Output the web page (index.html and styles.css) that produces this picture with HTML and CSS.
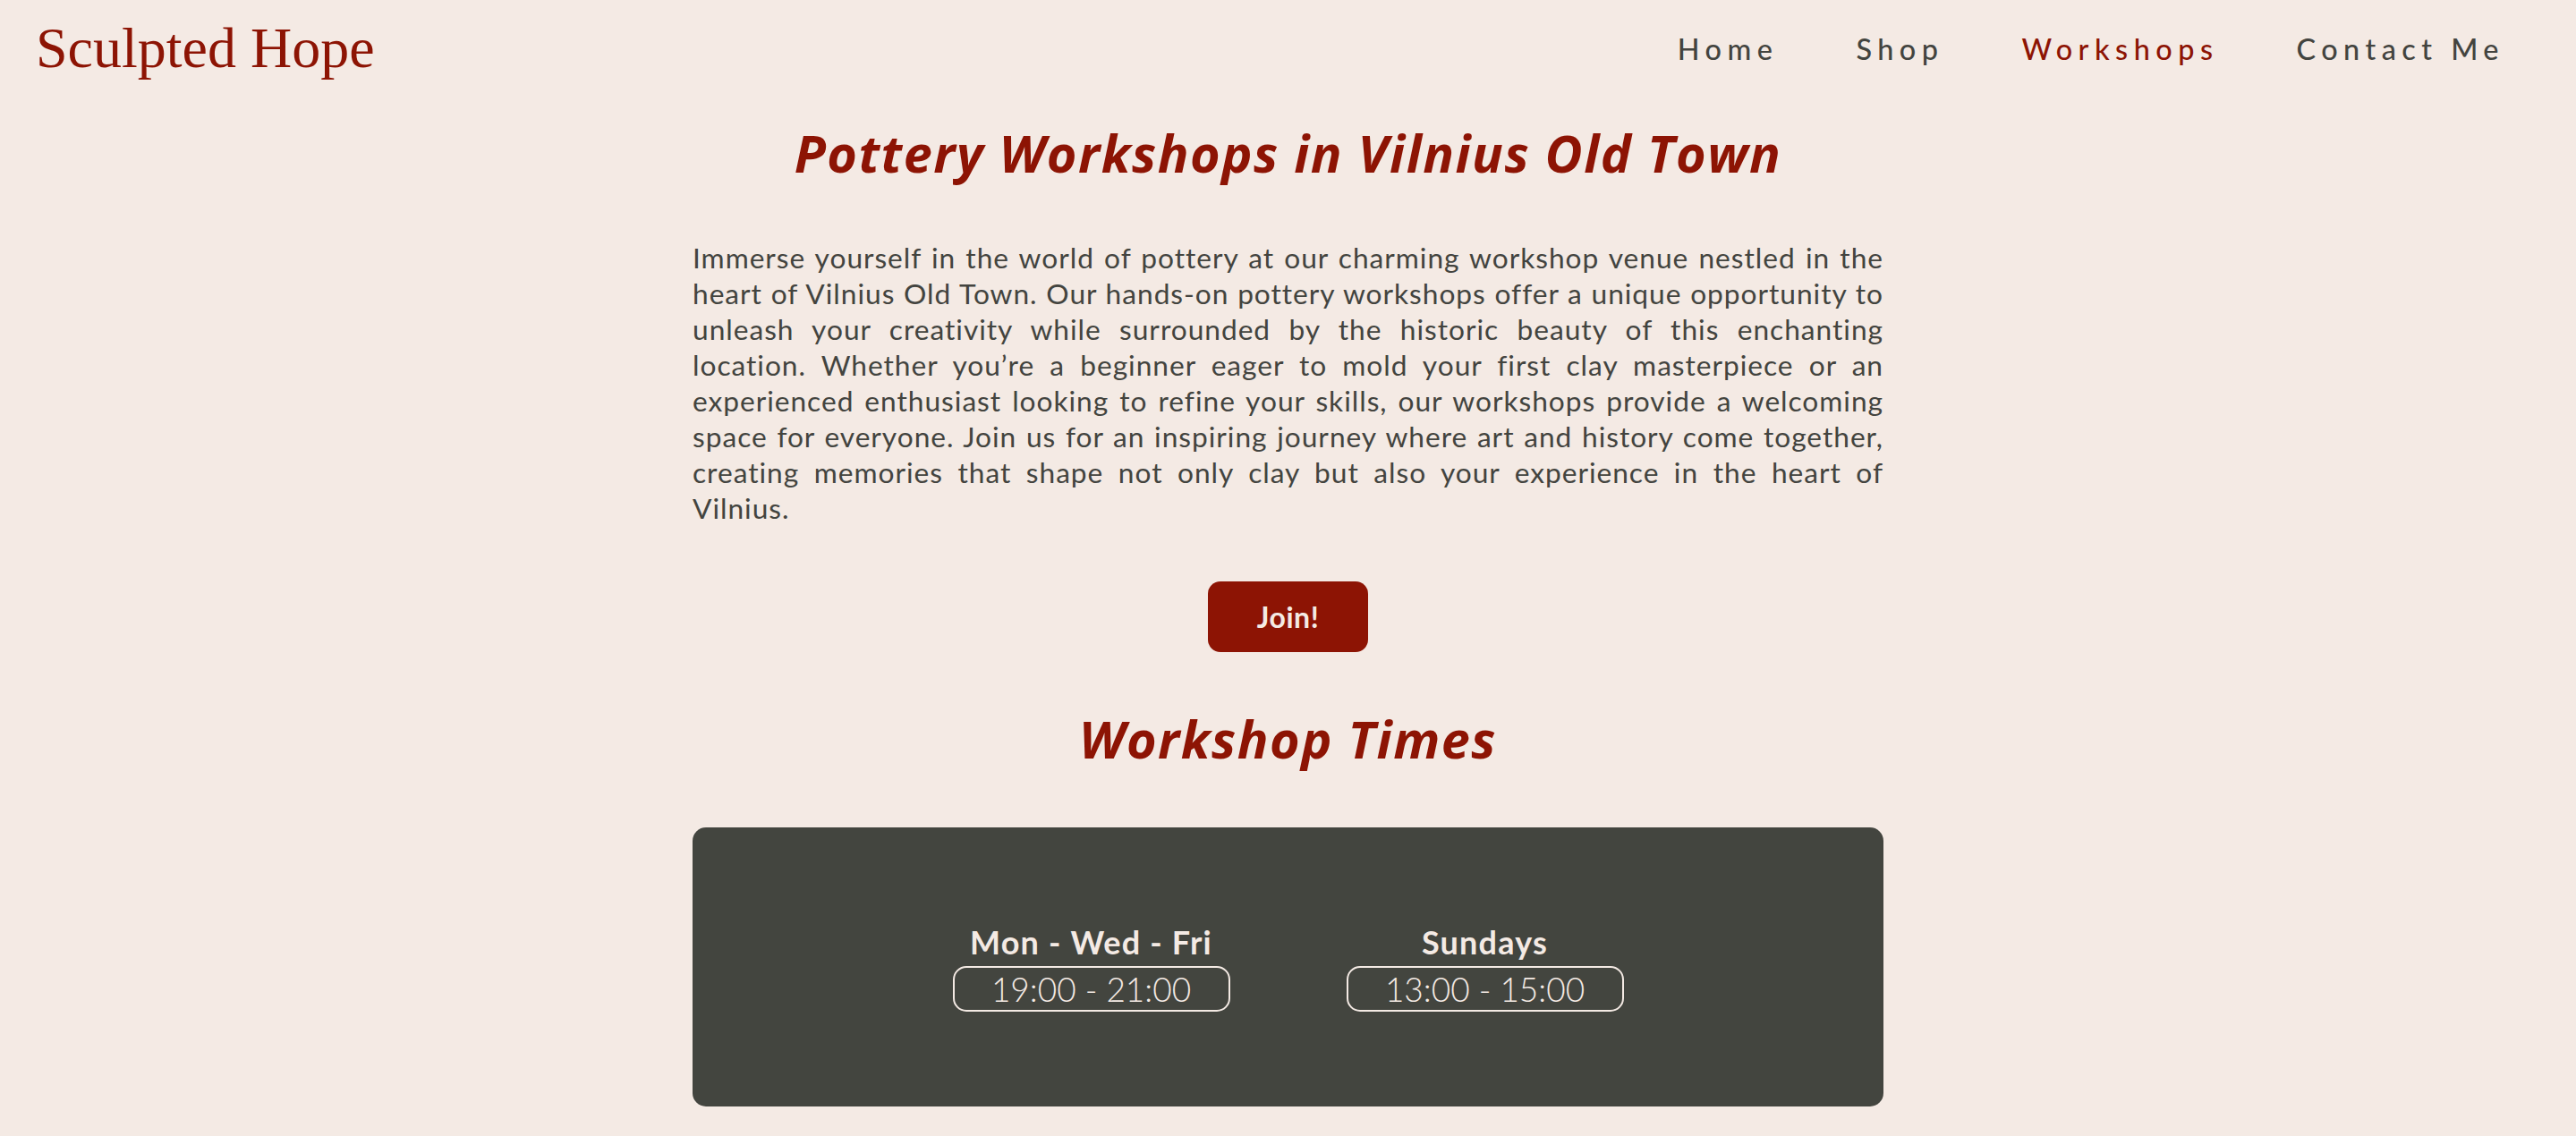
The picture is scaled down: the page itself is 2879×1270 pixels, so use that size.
FILE: index.html
```html
<!DOCTYPE html>
<html lang="en">
<head>
<meta charset="utf-8">
<title>Sculpted Hope - Workshops</title>
<link rel="stylesheet" href="styles.css">
</head>
<body>
<header class="site-header">
  <a class="logo" href="#">Sculpted Hope</a>
  <nav class="nav">
    <a class="nav-link" href="#">Home</a>
    <a class="nav-link" href="#">Shop</a>
    <a class="nav-link active" href="#">Workshops</a>
    <a class="nav-link" href="#">Contact Me</a>
  </nav>
</header>
<main class="content">
  <h1 class="title">Pottery Workshops in Vilnius Old Town</h1>
  <p class="intro">Immerse yourself in the world of pottery at our charming workshop venue nestled in the heart of Vilnius Old Town. Our hands-on pottery workshops offer a unique opportunity to unleash your creativity while surrounded by the historic beauty of this enchanting location. Whether you’re a beginner eager to mold your first clay masterpiece or an experienced enthusiast looking to refine your skills, our workshops provide a welcoming space for everyone. Join us for an inspiring journey where art and history come together, creating memories that shape not only clay but also your experience in the heart of Vilnius.</p>
  <div class="join-row"><button class="join-btn">Join!</button></div>
  <h2 class="title subtitle">Workshop Times</h2>
  <section class="times">
    <div class="slot">
      <div class="slot-days">Mon - Wed - Fri</div>
      <div class="slot-hours">19:00 - 21:00</div>
    </div>
    <div class="slot">
      <div class="slot-days">Sundays</div>
      <div class="slot-hours">13:00 - 15:00</div>
    </div>
  </section>
</main>
</body>
</html>
```
FILE: styles.css
```css
html, body {
  margin: 0;
  padding: 0;
}
body {
  background: #f4eae4;
  color: #43443f;
  font-family: Lato, "Noto Sans", sans-serif;
}
.site-header {
  display: flex;
  justify-content: space-between;
  align-items: center;
  height: 108px;
  padding: 0 80px 0 40px;
}
.logo {
  font-family: "Liberation Serif", "Times New Roman", serif;
  font-size: 64px;
  color: #8d1404;
  text-decoration: none;
}
.nav {
  display: flex;
  gap: 87px;
}
.nav-link {
  font-size: 32.4px;
  font-weight: 500;
  letter-spacing: 0.2em;
  color: #43443f;
  text-decoration: none;
}
.nav-link.active {
  color: #8d1404;
}
.content {
  width: 1331px;
  margin: 0 auto;
}
.title {
  margin: 28px 0 0;
  font-family: "Open Sans", Lato, sans-serif;
  font-size: 57.6px;
  font-weight: 700;
  font-style: italic;
  letter-spacing: 1.5px;
  color: #8d1404;
  text-align: center;
  line-height: 1.2;
}
.intro {
  margin: 63px 0 0;
  font-size: 31.7px;
  letter-spacing: 0.97px;
  line-height: 40px;
  text-align: justify;
}
.join-row {
  display: flex;
  justify-content: center;
  margin-top: 62px;
}
.join-btn {
  width: 179px;
  height: 79px;
  border: none;
  border-radius: 14px;
  background: #8d1404;
  color: #f4eae4;
  font-family: Lato, "Noto Sans", sans-serif;
  font-size: 32px;
  font-weight: 700;
  letter-spacing: 0.5px;
}
.subtitle {
  margin-top: 62px;
}
.times {
  margin-top: 65px;
  height: 312px;
  background: #43453f;
  border-radius: 15px;
  display: flex;
  justify-content: center;
  align-items: center;
  gap: 130px;
}
.slot {
  display: flex;
  flex-direction: column;
  align-items: center;
  width: 310px;
  color: #f4eae4;
}
.slot-days {
  font-size: 36px;
  font-weight: 700;
  letter-spacing: 1.2px;
  line-height: 45px;
}
.slot-hours {
  box-sizing: border-box;
  width: 310px;
  height: 51px;
  margin-top: 4px;
  border: 2px solid #f4eae4;
  border-radius: 15px;
  font-size: 37px;
  font-weight: 300;
  line-height: 47px;
  text-align: center;
}
```
